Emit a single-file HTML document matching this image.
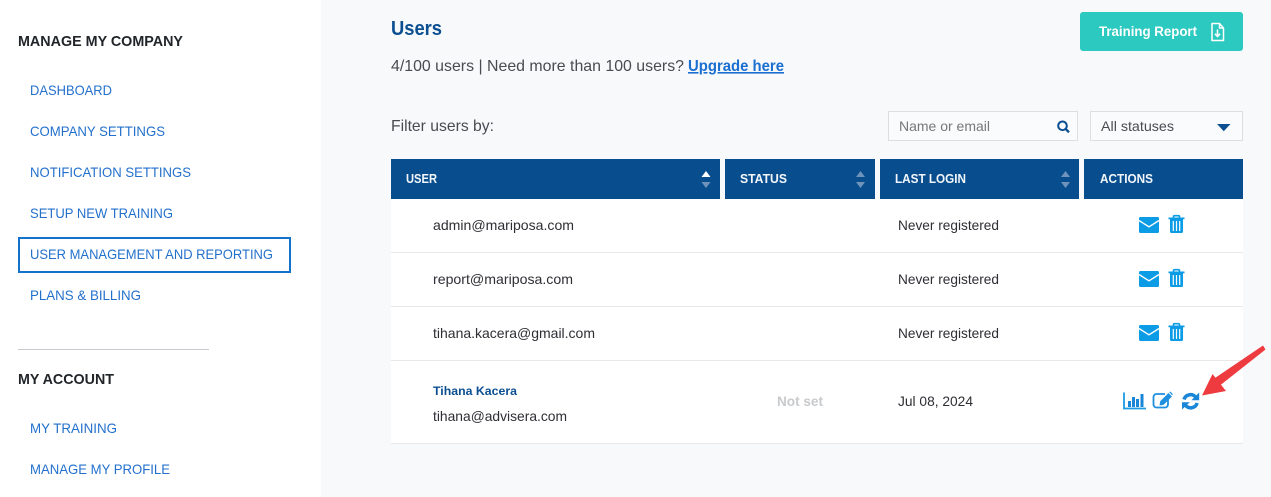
<!DOCTYPE html>
<html><head><meta charset="utf-8"><style>
html,body{margin:0;padding:0;width:1271px;height:497px;overflow:hidden;background:#f8f9fb}
svg{display:block}
text{font-family:"Liberation Sans",sans-serif}
.n{font-size:14px;fill:#2370cc}
.h{font-size:15px;font-weight:700;fill:#212529}
.t{font-size:14px;fill:#2e2e34}
.th{font-size:13px;font-weight:700;fill:#f2f6fa}
.g{font-size:16px;fill:#4a4a50}
</style></head><body>
<svg width="1271" height="497" viewBox="0 0 1271 497" xmlns="http://www.w3.org/2000/svg">
<rect width="1271" height="497" fill="#f8f9fb"/>
<rect width="321" height="497" fill="#fff"/>

<text class="h" x="18" y="46" textLength="165" lengthAdjust="spacingAndGlyphs">MANAGE MY COMPANY</text>
<text class="n" x="30" y="95" textLength="82" lengthAdjust="spacingAndGlyphs">DASHBOARD</text>
<text class="n" x="30" y="136" textLength="135" lengthAdjust="spacingAndGlyphs">COMPANY SETTINGS</text>
<text class="n" x="30" y="177" textLength="161" lengthAdjust="spacingAndGlyphs">NOTIFICATION SETTINGS</text>
<text class="n" x="30" y="218" textLength="143" lengthAdjust="spacingAndGlyphs">SETUP NEW TRAINING</text>
<rect x="19" y="238" width="271" height="34" fill="none" stroke="#1272cc" stroke-width="2"/>
<text class="n" x="30" y="259" textLength="243" lengthAdjust="spacingAndGlyphs">USER MANAGEMENT AND REPORTING</text>
<text class="n" x="30" y="300" textLength="111" lengthAdjust="spacingAndGlyphs">PLANS &amp; BILLING</text>
<rect x="18" y="349" width="191" height="1" fill="#c8cad0"/>
<text class="h" x="18" y="384" textLength="96" lengthAdjust="spacingAndGlyphs">MY ACCOUNT</text>
<text class="n" x="30" y="433" textLength="87" lengthAdjust="spacingAndGlyphs">MY TRAINING</text>
<text class="n" x="30" y="474" textLength="140" lengthAdjust="spacingAndGlyphs">MANAGE MY PROFILE</text>

<text x="391" y="35" font-size="20" font-weight="700" fill="#0b4f91" textLength="51" lengthAdjust="spacingAndGlyphs">Users</text>
<text class="g" x="391" y="71" textLength="293" lengthAdjust="spacingAndGlyphs">4/100 users | Need more than 100 users?</text>
<text x="688" y="71" font-size="16" font-weight="700" fill="#1b6fd0" text-decoration="underline" textLength="96" lengthAdjust="spacingAndGlyphs">Upgrade here</text>

<rect x="1080" y="12" width="163" height="39" rx="3" fill="#2bc9bf"/>
<text x="1099" y="36" font-size="14" font-weight="700" fill="#fff" textLength="98" lengthAdjust="spacingAndGlyphs">Training Report</text>
<path d="M1212 23.500h7.500l4 4.500v12.500h-11.500z M1219.500 23.500v4.500h4" fill="none" stroke="#fff" stroke-width="1.500" stroke-linejoin="round"/>
<path d="M1217.500 29.500v6.500M1215 33.800l2.500 2.700 2.500-2.700" fill="none" stroke="#fff" stroke-width="1.600"/>

<text class="g" x="391" y="131" textLength="103" lengthAdjust="spacingAndGlyphs">Filter users by:</text>
<rect x="888.500" y="111.500" width="189" height="29" fill="#fafbfc" stroke="#dedede"/>
<text x="899" y="131" font-size="14" fill="#777" textLength="91" lengthAdjust="spacingAndGlyphs">Name or email</text>
<circle cx="1062.500" cy="125.800" r="4.300" fill="none" stroke="#0b4f91" stroke-width="2"/>
<path d="M1065.500 128.800l3.500 3.500" stroke="#0b4f91" stroke-width="2.400"/>
<rect x="1090.500" y="111.500" width="152" height="29" fill="#fafbfc" stroke="#dedede"/>
<text x="1101" y="131" font-size="14" fill="#4a4a50" textLength="73" lengthAdjust="spacingAndGlyphs">All statuses</text>
<path d="M1217 124h13.500l-6.750 7.200z" fill="#0b4f91"/>

<rect x="391" y="159" width="329" height="40" fill="#084e8f"/>
<rect x="725" y="159" width="150" height="40" fill="#084e8f"/>
<rect x="880" y="159" width="199" height="40" fill="#084e8f"/>
<rect x="1084" y="159" width="159" height="40" fill="#084e8f"/>
<text class="th" x="406" y="183" textLength="31" lengthAdjust="spacingAndGlyphs">USER</text>
<text class="th" x="740" y="183" textLength="47" lengthAdjust="spacingAndGlyphs">STATUS</text>
<text class="th" x="895" y="183" textLength="71" lengthAdjust="spacingAndGlyphs">LAST LOGIN</text>
<text class="th" x="1100" y="183" textLength="53" lengthAdjust="spacingAndGlyphs">ACTIONS</text>
<path d="M701.500 177l4.500-6 4.500 6z" fill="#fff"/>
<path d="M701.500 182l4.500 6 4.500-6z" fill="#6f93bb"/>
<path d="M856 177l4.500-6 4.500 6zM856 182l4.500 6 4.500-6zM1061 177l4.500-6 4.500 6zM1061 182l4.500 6 4.500-6z" fill="#6f93bb"/>

<rect x="391" y="199" width="852" height="245" fill="#fff"/>
<rect x="391" y="252" width="852" height="1" fill="#e8e8e8"/>
<rect x="391" y="306" width="852" height="1" fill="#e8e8e8"/>
<rect x="391" y="360" width="852" height="1" fill="#e8e8e8"/>
<rect x="391" y="443" width="852" height="1" fill="#e8e8e8"/>

<text class="t" x="433" y="230" textLength="141" lengthAdjust="spacingAndGlyphs">admin@mariposa.com</text>
<text class="t" x="898" y="230" textLength="101" lengthAdjust="spacingAndGlyphs">Never registered</text>
<text class="t" x="433" y="284" textLength="140" lengthAdjust="spacingAndGlyphs">report@mariposa.com</text>
<text class="t" x="898" y="284" textLength="101" lengthAdjust="spacingAndGlyphs">Never registered</text>
<text class="t" x="433" y="338" textLength="162" lengthAdjust="spacingAndGlyphs">tihana.kacera@gmail.com</text>
<text class="t" x="898" y="338" textLength="101" lengthAdjust="spacingAndGlyphs">Never registered</text>

<text x="433" y="395" font-size="12" font-weight="700" fill="#0b4f91" textLength="84" lengthAdjust="spacingAndGlyphs">Tihana Kacera</text>
<text class="t" x="433" y="421" textLength="134" lengthAdjust="spacingAndGlyphs">tihana@advisera.com</text>
<text x="777" y="406" font-size="14" font-weight="700" fill="#c8cacd" textLength="46" lengthAdjust="spacingAndGlyphs">Not set</text>
<text class="t" x="898" y="406" textLength="75" lengthAdjust="spacingAndGlyphs">Jul 08, 2024</text>

<defs>
<g id="acts">
<rect x="1139" y="217" width="20" height="16" rx="1.500" fill="#0c9be5"/>
<path d="M1139 220.500l10 6.300 10-6.300" fill="none" stroke="#fff" stroke-width="1.400"/>
<path d="M1170 219h13v12.500a1.500 1.500 0 0 1-1.500 1.500h-10a1.500 1.500 0 0 1-1.500-1.500z" fill="#0c9be5"/>
<rect x="1168.500" y="217.500" width="16" height="1.800" fill="#0c9be5"/>
<path d="M1173.500 218v-1.300q0-1 1-1h4q1 0 1 1v1.300" fill="none" stroke="#0c9be5" stroke-width="1.600"/>
<path d="M1173.300 221v10M1176.500 221v10M1179.700 221v10" stroke="#fff" stroke-width="1.200"/>
</g>
</defs>
<use href="#acts"/>
<use href="#acts" y="54"/>
<use href="#acts" y="108"/>

<path d="M1124 392.500v16h22" fill="none" stroke="#1a9be2" stroke-width="1.800"/>
<path d="M1128 401h3v6h-3zM1132 397h3v10h-3zM1136 399h3v8h-3zM1140.500 394h3v13h-3z" fill="#1a86d8"/>

<path d="M1165 394h-8.500a3 3 0 0 0-3 3v7.500a3 3 0 0 0 3 3h8.500a3 3 0 0 0 3-3v-5" fill="none" stroke="#1f8fdf" stroke-width="1.800"/>
<path d="M1159.500 405.500l.7-4.200 8.300-8.300 3.500 3.500-8.300 8.300z M1169.300 392.300l1-.8 2.600 2.600-.8 1z" fill="#1f8fdf"/>

<path d="M1184 399.500a6.800 6.800 0 0 1 11.500-2.600" fill="none" stroke="#1a86d8" stroke-width="3.500"/>
<path d="M1199.200 392.500v7.800h-7.800z" fill="#1a86d8"/>
<path d="M1197.200 403a6.800 6.800 0 0 1-11.500 2.600" fill="none" stroke="#1a86d8" stroke-width="3.500"/>
<path d="M1182 409.500v-7.300h7.800z" fill="#1a86d8"/>

<path d="M1263 345.500L1265.500 349.500L1218 387L1212 380z" fill="#ee3b3f"/>
<path d="M1202 395.500L1212.500 374L1226 391z" fill="#ee3b3f"/>
</svg>
</body></html>
